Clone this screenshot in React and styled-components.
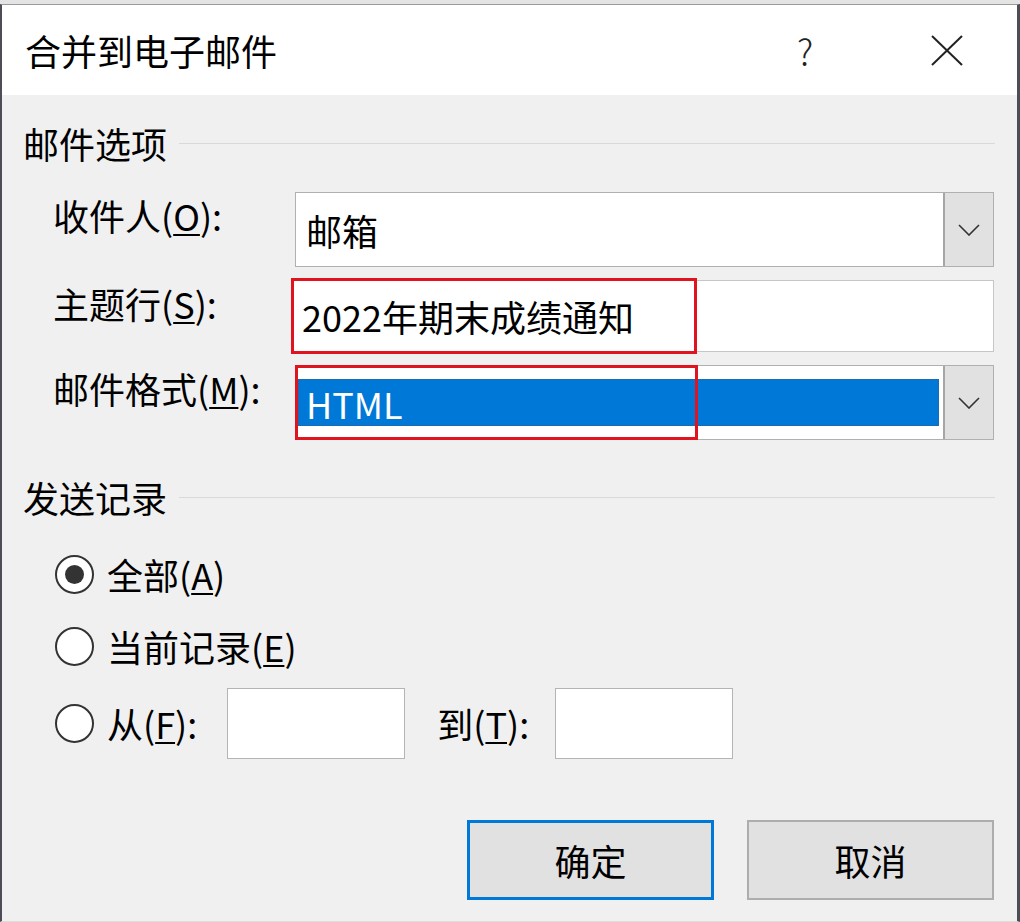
import React from "react";
import styled, { createGlobalStyle } from "styled-components";

const GlobalStyle = createGlobalStyle`
  html, body {
    margin: 0;
    padding: 0;
    background: #e4e4e4;
  }
  body {
    font-family: "Noto Sans CJK SC", "Noto Sans", sans-serif;
    color: #000;
  }
`;

const Dialog = styled.div`
  box-sizing: border-box;
  height: 918px;
  margin-top: 4px;
  background: #f0f0f0;
  border-left: 2px solid #4d4d57;
  border-right: 3px solid #4d4d57;
  border-top: 1px solid #9a9a9a;
  border-bottom: 1px solid #dcdcdc;
  display: flex;
  flex-direction: column;
`;

const TitleBar = styled.div`
  height: 90px;
  background: #fff;
  display: flex;
  align-items: center;
  padding-left: 23px;
`;

const Title = styled.div`
  flex: 1;
  font-size: 36px;
  line-height: 36px;
`;

const HelpButton = styled.div`
  width: 40px;
  text-align: center;
  font-size: 36px;
  font-weight: 300;
  line-height: 36px;
  color: #222;
  margin-right: 106px;
`;

const CloseButton = styled.div`
  display: flex;
  margin-right: 54px;
`;

const Body = styled.div`
  padding: 30px 22px 0 21px;
  display: flex;
  flex-direction: column;
`;

const GroupHeader = styled.div`
  display: flex;
  align-items: center;
  gap: 12px;
  height: 36px;
  font-size: 36px;
  line-height: 36px;
  margin-top: ${(p) => p.$top || 0}px;
`;

const GroupLine = styled.div`
  flex: 1;
  height: 1px;
  background: #d9d9d9;
`;

const FieldGrid = styled.div`
  display: grid;
  grid-template-columns: 240px 1fr;
  row-gap: 13px;
  margin: 31px 1px 0 30px;
`;

const Label = styled.div`
  font-size: 36px;
  line-height: 36px;
  padding-top: 5px;
  white-space: nowrap;
`;

const Key = styled.u`
  text-decoration-thickness: 2px;
  text-underline-offset: 3px;
`;

const FieldCell = styled.div`
  position: relative;
  height: ${(p) => p.$h}px;
`;

const Combo = styled.div`
  box-sizing: border-box;
  height: 100%;
  margin-left: 2px;
  display: flex;
  background: #fff;
  border: 1px solid #b0b0b0;
`;

const ComboText = styled.div`
  flex: 1;
  display: flex;
  align-items: center;
  padding: 0 4px 0 2px;
  font-size: 36px;
  line-height: 36px;
`;

const PlainValue = styled.span`
  padding-left: 8px;
`;

const Selection = styled.div`
  flex: 1;
  height: 47px;
  display: flex;
  align-items: center;
  padding-left: 8px;
  background: #0078d7;
  color: #fff;
  outline: 1px dotted #3a5f86;
  outline-offset: -1px;
`;

const DropButton = styled.div`
  width: 48px;
  display: flex;
  align-items: center;
  justify-content: center;
  background: #e1e1e1;
  border-left: 2px solid #a6a6a6;
`;

const TextBox = styled.div`
  box-sizing: border-box;
  height: 100%;
  display: flex;
  align-items: center;
  padding-left: 8px;
  background: #fff;
  border: 1px solid #c6c6c6;
  font-size: 36px;
  line-height: 36px;
`;

const Annotation = styled.div`
  position: absolute;
  left: ${(p) => p.$x}px;
  top: ${(p) => p.$y}px;
  width: ${(p) => p.$w}px;
  height: ${(p) => p.$h}px;
  box-sizing: border-box;
  border: 3px solid #e0141e;
  pointer-events: none;
`;

const RadioList = styled.div`
  display: flex;
  flex-direction: column;
  margin: 23px 0 0 32px;
`;

const RadioRow = styled.div`
  display: flex;
  align-items: center;
  height: ${(p) => p.$h}px;
  font-size: 36px;
  line-height: 36px;
`;

const RadioCircle = styled.div`
  box-sizing: border-box;
  width: 39px;
  height: 39px;
  border-radius: 50%;
  border: 2px solid #333;
  background: #fff;
  display: flex;
  align-items: center;
  justify-content: center;
  margin-right: 13px;
  &::after {
    content: "";
    display: ${(p) => (p.$checked ? "block" : "none")};
    width: 19px;
    height: 19px;
    border-radius: 50%;
    background: #333;
  }
`;

const SmallInput = styled.div`
  box-sizing: border-box;
  width: 178px;
  height: 71px;
  background: #fff;
  border: 1px solid #b4b4b4;
  margin: 0 ${(p) => p.$right || 0}px 0 ${(p) => p.$left}px;
`;

const ButtonRow = styled.div`
  display: flex;
  justify-content: flex-end;
  gap: 33px;
  margin: 56px 1px 0 0;
`;

const Button = styled.div`
  box-sizing: border-box;
  width: 247px;
  height: 80px;
  display: flex;
  align-items: center;
  justify-content: center;
  background: #e1e1e1;
  border: ${(p) => (p.$primary ? "3px solid #0078d7" : "2px solid #adadad")};
  font-size: 36px;
  line-height: 36px;
`;

const Chevron = () => (
  <svg width="22" height="12" viewBox="0 0 22 12">
    <polyline points="1,1 11,11 21,1" fill="none" stroke="#333" strokeWidth="1.6" />
  </svg>
);

const CloseIcon = () => (
  <svg width="32" height="31" viewBox="0 0 32 31">
    <line x1="1" y1="1" x2="31" y2="30" stroke="#222" strokeWidth="2" />
    <line x1="31" y1="1" x2="1" y2="30" stroke="#222" strokeWidth="2" />
  </svg>
);

export default function App() {
  return (
    <>
      <GlobalStyle />
      <Dialog>
        <TitleBar>
          <Title>合并到电子邮件</Title>
          <HelpButton>?</HelpButton>
          <CloseButton>
            <CloseIcon />
          </CloseButton>
        </TitleBar>

        <Body>
          <GroupHeader>
            邮件选项
            <GroupLine />
          </GroupHeader>

          <FieldGrid>
            <Label>
              收件人(<Key>O</Key>):
            </Label>
            <FieldCell $h={75}>
              <Combo>
                <ComboText>
                  <PlainValue>邮箱</PlainValue>
                </ComboText>
                <DropButton>
                  <Chevron />
                </DropButton>
              </Combo>
            </FieldCell>

            <Label>
              主题行(<Key>S</Key>):
            </Label>
            <FieldCell $h={72}>
              <TextBox>2022年期末成绩通知</TextBox>
              <Annotation $x={-2} $y={-2} $w={406} $h={76} />
            </FieldCell>

            <Label>
              邮件格式(<Key>M</Key>):
            </Label>
            <FieldCell $h={75}>
              <Combo>
                <ComboText>
                  <Selection>HTML</Selection>
                </ComboText>
                <DropButton>
                  <Chevron />
                </DropButton>
              </Combo>
              <Annotation $x={2} $y={0} $w={403} $h={75} />
            </FieldCell>
          </FieldGrid>

          <GroupHeader $top={39}>
            发送记录
            <GroupLine />
          </GroupHeader>

          <RadioList>
            <RadioRow $h={72}>
              <RadioCircle $checked />
              全部(<Key>A</Key>)
            </RadioRow>
            <RadioRow $h={72}>
              <RadioCircle />
              当前记录(<Key>E</Key>)
            </RadioRow>
            <RadioRow $h={82}>
              <RadioCircle />
              从(<Key>F</Key>):
              <SmallInput $left={30} $right={32} />
              到(<Key>T</Key>):
              <SmallInput $left={26} />
            </RadioRow>
          </RadioList>

          <ButtonRow>
            <Button $primary>确定</Button>
            <Button>取消</Button>
          </ButtonRow>
        </Body>
      </Dialog>
    </>
  );
}
